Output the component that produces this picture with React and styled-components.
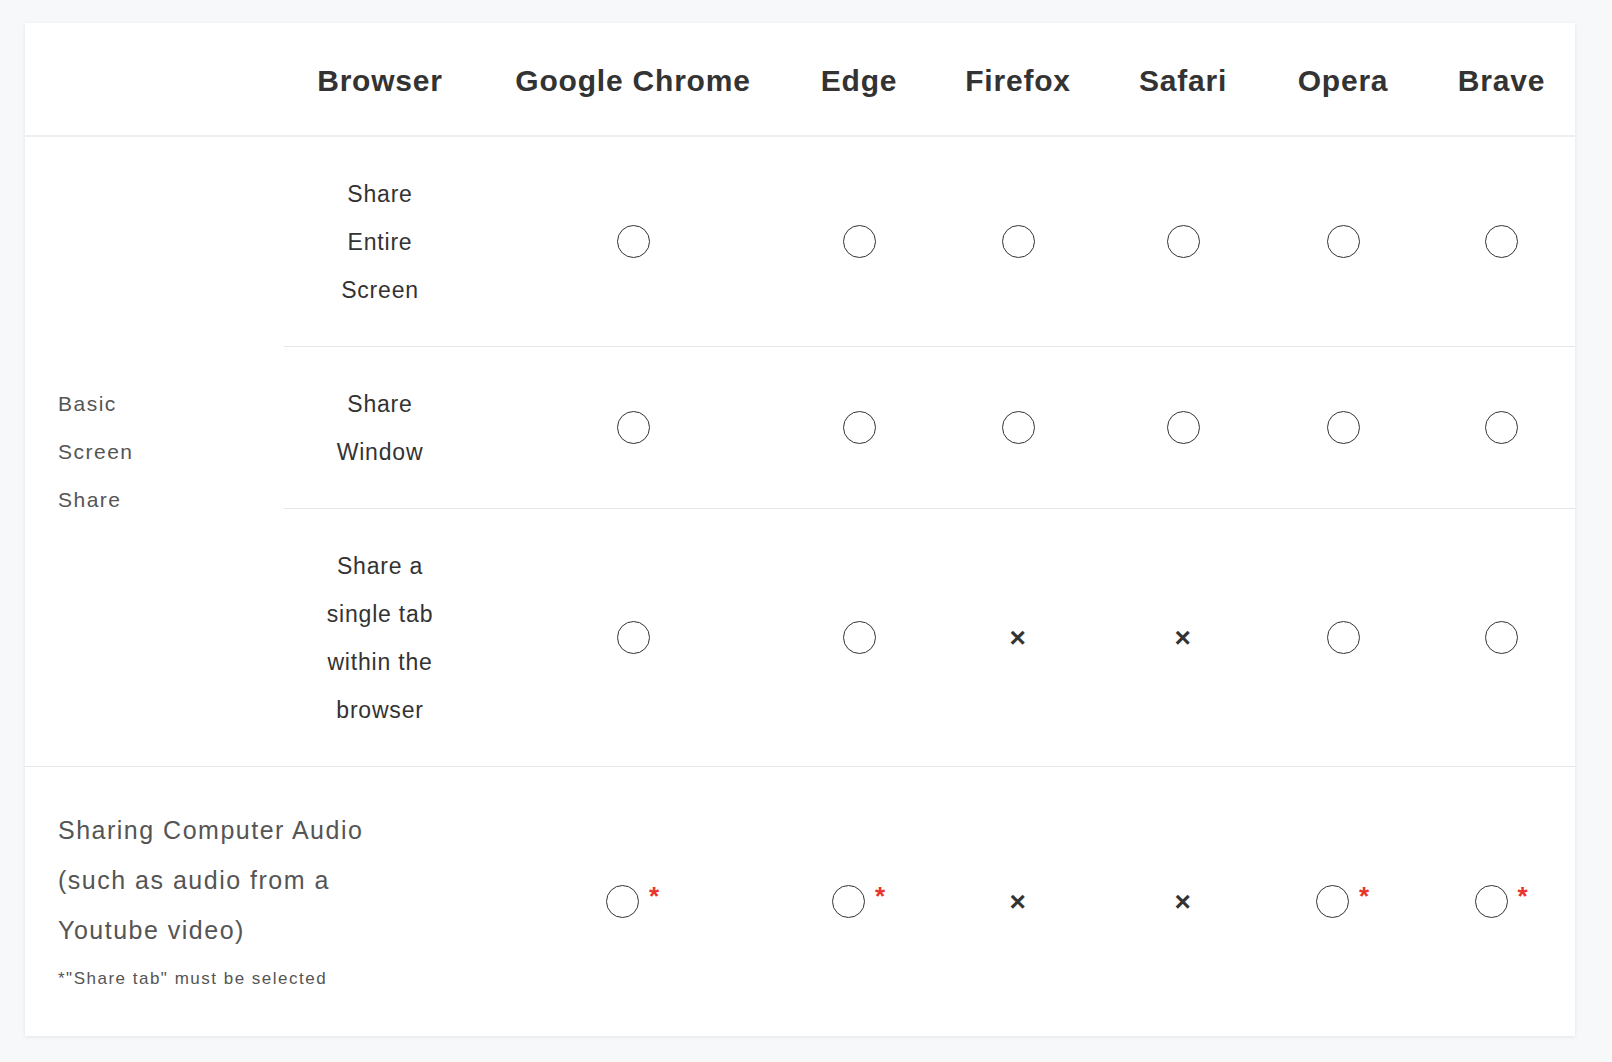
import React from 'react';
import styled, { createGlobalStyle } from 'styled-components';

const Global = createGlobalStyle`
  body {
    margin: 0;
    background: #f7f8fa;
    font-family: 'Liberation Sans', Arial, sans-serif;
    color: #333;
  }
`;

const Page = styled.div`
  padding: 23px 37px 26px 25px;
`;

const Card = styled.div`
  background: #fff;
  box-shadow: 0 1px 4px rgba(0, 0, 0, 0.08);
  display: grid;
  grid-template-columns: 259px 192px 314px 138px 180px 150px 170px 147px;
  grid-template-rows: 114px 210px 162px 258px 269px;
`;

const Head = styled.div`
  display: flex;
  align-items: center;
  justify-content: center;
  padding-top: 4px;
  font-size: 30px;
  font-weight: bold;
  letter-spacing: 0.8px;
  color: #333;
  border-bottom: 2px solid #eeeeee;
`;

const Cell = styled.div`
  display: flex;
  align-items: center;
  justify-content: center;
  text-align: center;
  font-size: 23px;
  line-height: 48px;
  letter-spacing: 0.8px;
  color: #333;
  border-bottom: ${(p) => (p.$line ? '1px solid #e6e6e6' : 'none')};
`;

const Group = styled.div`
  grid-row: 2 / span 3;
  display: flex;
  align-items: center;
  padding-left: 33px;
  font-size: 21px;
  line-height: 48px;
  letter-spacing: 1.5px;
  color: #555;
  border-bottom: 1px solid #e6e6e6;
`;

const AudioLabel = styled.div`
  grid-column: 1 / span 2;
  display: flex;
  flex-direction: column;
  justify-content: center;
  padding-left: 33px;
  padding-bottom: 10px;
  font-size: 25px;
  line-height: 50px;
  letter-spacing: 1.5px;
  color: #555;
`;

const Note = styled.div`
  font-size: 17px;
  line-height: 20px;
  letter-spacing: 1.5px;
  margin-top: 14px;
`;

const Circle = styled.span`
  display: inline-block;
  width: 33px;
  height: 33px;
  border: 1.5px solid #333;
  border-radius: 50%;
  box-sizing: border-box;
`;

const Cross = styled.span`
  font-size: 28px;
  font-weight: bold;
  line-height: 1;
  color: #333;
`;

const Star = styled.span`
  color: #e8352b;
  font-size: 26px;
  font-weight: bold;
  margin-left: 10px;
  margin-top: -12px;
`;

const browsers = ['Browser', 'Google Chrome', 'Edge', 'Firefox', 'Safari', 'Opera', 'Brave'];

const rows = [
  { label: ['Share', 'Entire', 'Screen'], vals: [1, 1, 1, 1, 1, 1] },
  { label: ['Share', 'Window'], vals: [1, 1, 1, 1, 1, 1] },
  { label: ['Share a', 'single tab', 'within the', 'browser'], vals: [1, 1, 0, 0, 1, 1] },
];

const audio = [2, 2, 0, 0, 2, 2];

const Mark = ({ v }) => {
  if (v === 0) return <Cross>×</Cross>;
  if (v === 2) return (<><Circle /><Star>*</Star></>);
  return <Circle />;
};

export default function App() {
  return (
    <Page>
      <Global />
      <Card>
        <Head />
        {browsers.map((b) => <Head key={b}>{b}</Head>)}
        <Group>Basic<br />Screen<br />Share</Group>
        {rows.map((r, i) => (
          <React.Fragment key={i}>
            <Cell $line>{r.label.map((l, j) => (<React.Fragment key={j}>{j > 0 && <br />}{l}</React.Fragment>))}</Cell>
            {r.vals.map((v, k) => <Cell $line key={k}><Mark v={v} /></Cell>)}
          </React.Fragment>
        ))}
        <AudioLabel>
          <div>Sharing Computer Audio<br />(such as audio from a<br />Youtube video)</div>
          <Note>*"Share tab" must be selected</Note>
        </AudioLabel>
        {audio.map((v, k) => <Cell key={k}><Mark v={v} /></Cell>)}
      </Card>
    </Page>
  );
}
